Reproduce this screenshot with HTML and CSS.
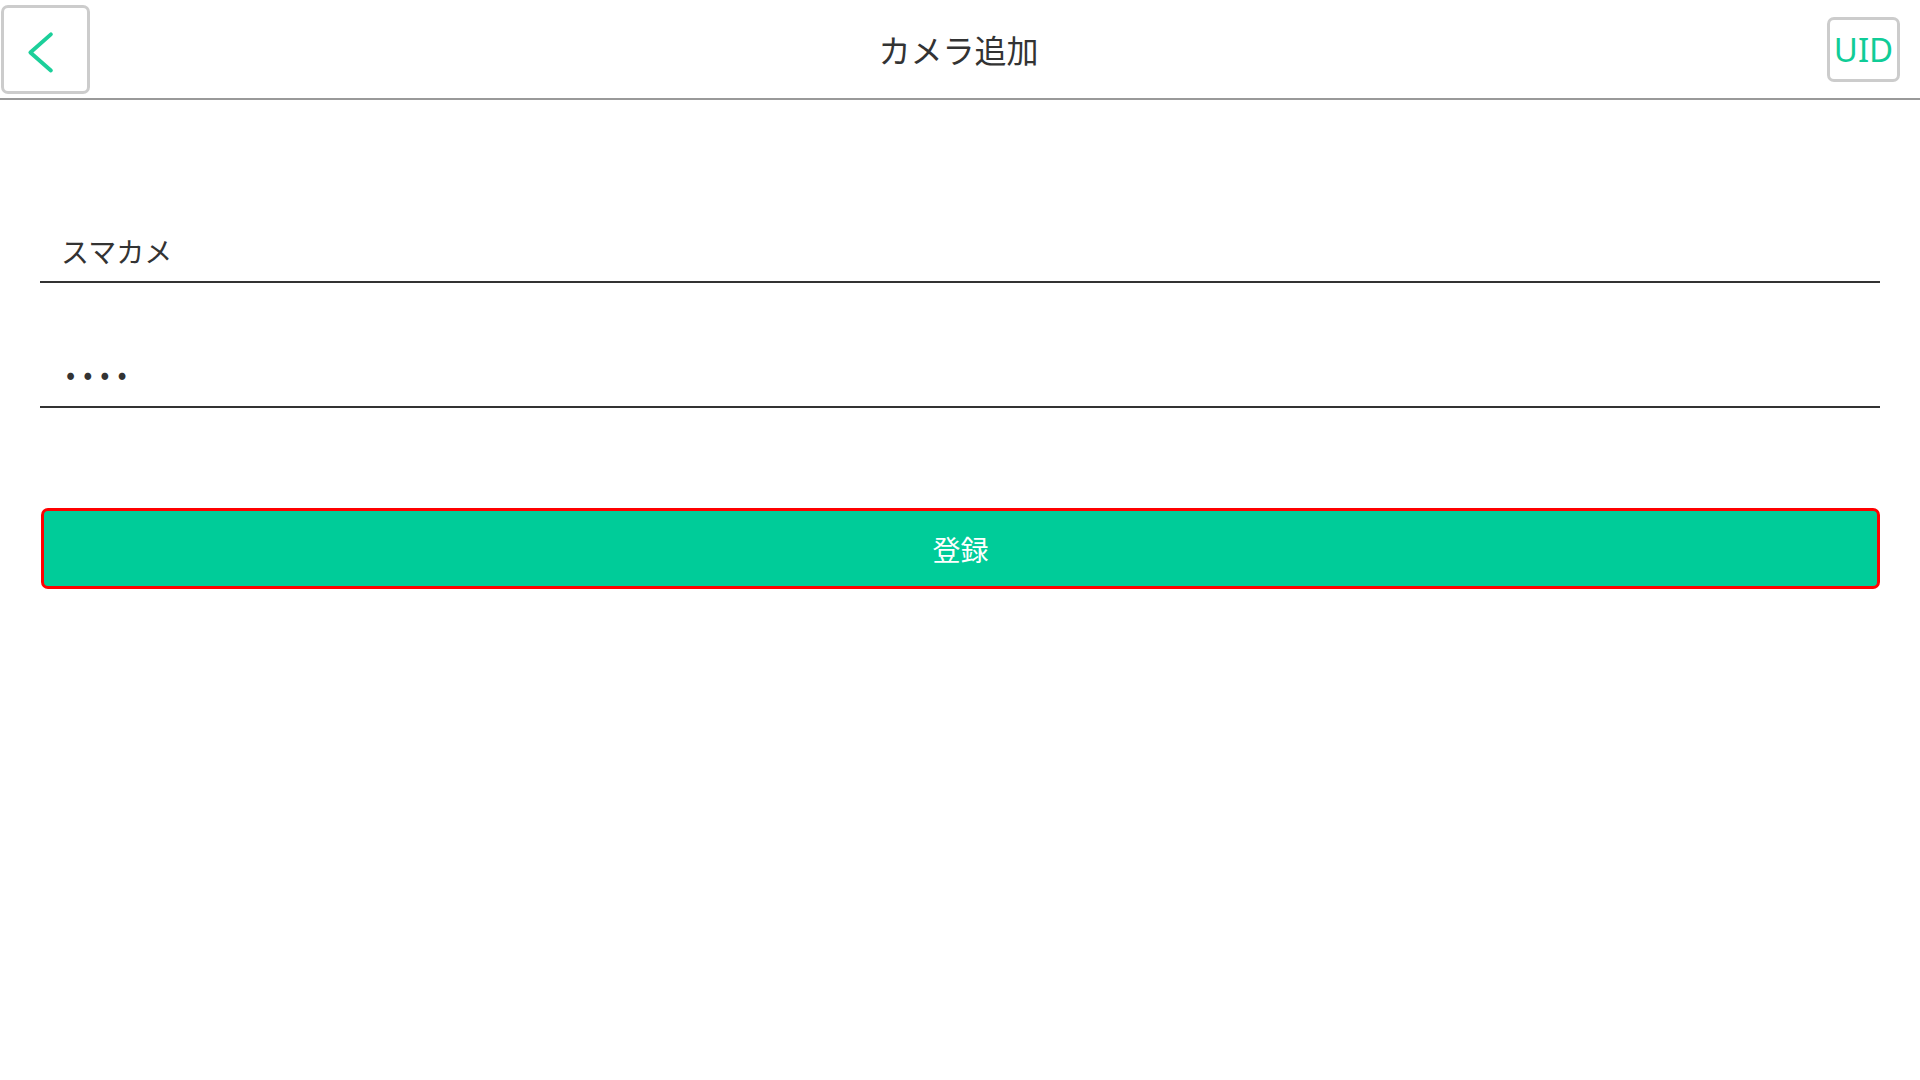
FILE: index.html
```html
<!DOCTYPE html>
<html lang="ja">
<head>
    <meta charset="utf-8">
    <title>カメラ追加</title>
    <link rel="stylesheet" href="styles.css">
</head>
<body>
    <div class="header">
        <button class="back-btn" aria-label="戻る">
            <svg width="85" height="85" viewBox="0 0 85 85">
                <polyline points="48,27 27,45.5 48,64" fill="none" stroke="#1ccf9a" stroke-width="4" stroke-linecap="round" stroke-linejoin="round"/>
            </svg>
        </button>
        <h1 class="title">カメラ追加</h1>
        <button class="uid-btn">UID</button>
    </div>

    <div class="form">
        <div class="field field-name">スマカメ</div>
        <div class="field field-pass"><span class="dots">••••</span></div>
        <button class="submit-btn">登録</button>
    </div>
</body>
</html>
```

FILE: styles.css
```css
body {
    margin: 0;
    background-color: #fff;
    color: #333;
    font-family: "Noto Sans CJK JP", "Noto Sans", sans-serif;
}

.header {
    height: 98px;
    border-bottom: 2px solid #999;
    display: flex;
    align-items: center;
    justify-content: space-between;
    padding: 0 20px 0 1px;
}

.back-btn {
    width: 89px;
    height: 89px;
    margin-top: 1px;
    padding: 0;
    border: 3px solid #cccccc;
    border-radius: 7px;
    background: #fff;
    display: flex;
    align-items: center;
    justify-content: center;
}

.title {
    margin: 0;
    font-size: 32px;
    font-weight: normal;
    color: #333;
}

.uid-btn {
    width: 73px;
    height: 65px;
    margin-top: 1px;
    padding: 0;
    border: 3px solid #cccccc;
    border-radius: 7px;
    background: #fff;
    color: #10cc97;
    font-family: "Noto Sans", sans-serif;
    font-size: 33px;
    line-height: 1;
}

.form {
    padding: 0 40px;
    display: flex;
    flex-direction: column;
}

.field {
    height: 60px;
    border-bottom: 2px solid #333;
    display: flex;
    align-items: center;
    padding-left: 21px;
    font-size: 28px;
    color: #333;
}

.field-name {
    margin-top: 121px;
}

.field-pass {
    margin-top: 63px;
}

.dots {
    font-size: 27px;
    letter-spacing: 8px;
    padding-left: 5px;
    padding-bottom: 7px;
}

.submit-btn {
    margin-top: 100px;
    margin-left: 1px;
    height: 81px;
    border: 3px solid #ff0000;
    border-radius: 7px;
    background-color: #00cc99;
    color: #fff;
    font-family: "Noto Sans CJK JP", sans-serif;
    font-size: 28px;
}
```
